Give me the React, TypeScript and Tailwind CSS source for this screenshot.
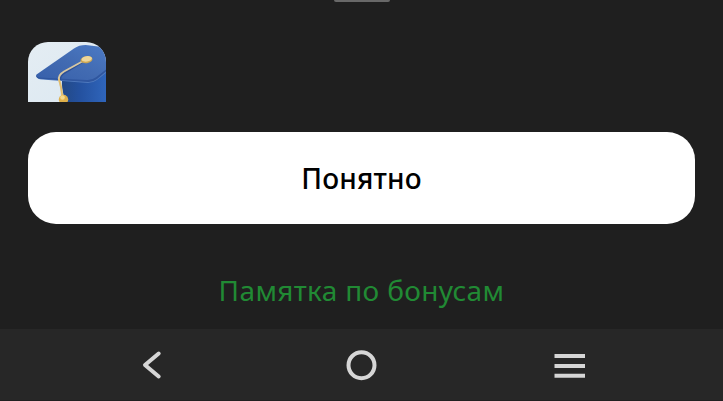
import type { ReactNode } from "react";

function CapIcon() {
  return (
    <svg className="block" width="78" height="60" viewBox="0 0 78 60" aria-hidden="true">
      <defs>
        <linearGradient id="tile" x1="0" y1="0" x2="1" y2="1">
          <stop offset="0" stopColor="#e4edf3" />
          <stop offset="1" stopColor="#dce8f1" />
        </linearGradient>
        <linearGradient id="board" x1="0" y1="1" x2="1" y2="0">
          <stop offset="0" stopColor="#3760ab" />
          <stop offset="0.5" stopColor="#426bb2" />
          <stop offset="1" stopColor="#4b7ac5" />
        </linearGradient>
        <linearGradient id="base" x1="0" y1="0" x2="1" y2="0">
          <stop offset="0" stopColor="#234985" />
          <stop offset="0.4" stopColor="#24519f" />
          <stop offset="1" stopColor="#2f65bb" />
        </linearGradient>
      </defs>
      <rect width="78" height="60" fill="url(#tile)" />
      <path d="M34 35L78 26V60H38Q33 49 34 35Z" fill="url(#base)" />
      <path d="M8.5 34Q9 37 14 37.6L60 41Q65 41 69 38L78 31V26L60 37L12 34Z" fill="#4f79bd" />
      <path d="M8 33.5Q8 36.5 12 36.8L60 39.9Q65 40.2 69 37.1L78 29.5V25L60 36L12 33Z" fill="#2f569f" />
      <path
        d="M8.5 32.5L46 6.5Q52 2.5 60 3.2L70 4.5Q75 5.5 78 9V27.5L68 35.2Q64 38.2 59 38L12 35.4Q7 34.8 8.5 32.5Z"
        fill="url(#board)"
      />
      <path d="M57 18.5L37 30.5Q32 33 32 38" fill="none" stroke="#2d5096" strokeWidth="2" />
      <path d="M57 18L36 29.5Q30 33 31 38Q33.5 45 34 55" fill="none" stroke="#d6c7a2" strokeWidth="1.9" />
      <path d="M31 37Q33.5 45 34.5 55" fill="none" stroke="#e3bd6b" strokeWidth="1.7" />
      <ellipse cx="58.5" cy="17.7" rx="6" ry="3.5" fill="#cda752" transform="rotate(-9 58.5 17.7)" />
      <ellipse cx="58.8" cy="16.9" rx="5.2" ry="2.7" fill="#eed79b" transform="rotate(-9 58.8 16.9)" />
      <circle cx="35.5" cy="57.5" r="4.7" fill="#dfb04a" />
      <circle cx="34.5" cy="55.5" r="2.3" fill="#f6d98a" />
    </svg>
  );
}

function NavButton({ label, children }: { label: string; children: ReactNode }) {
  return (
    <button type="button" aria-label={label} className="flex size-10 items-center justify-center">
      <svg
        width="40"
        height="40"
        viewBox="0 0 40 40"
        fill="none"
        stroke="#d6d6d6"
        strokeWidth="4"
        strokeLinecap="round"
        strokeLinejoin="round"
      >
        {children}
      </svg>
    </button>
  );
}

export default function App() {
  return (
    <div className="flex h-[401px] w-[723px] flex-col overflow-hidden bg-[#1f1f1f] font-['Noto_Sans',sans-serif]">
      <div className="mx-auto h-0.5 w-14 shrink-0 rounded-b-sm bg-[#686868]" />

      <main className="flex h-[327px] shrink-0 flex-col px-7 pt-10">
        <div className="h-[60px] w-[78px] shrink-0 overflow-hidden rounded-t-[20px]">
          <CapIcon />
        </div>
        <button
          type="button"
          className="mt-[30px] flex h-[92px] shrink-0 items-center justify-center rounded-[28px] bg-white pb-px text-[28px] leading-none font-medium tracking-[0.2px] text-black"
        >
          Понятно
        </button>
        <a href="#" className="mt-12 self-center text-[28px] leading-9 tracking-[0.34px] text-[#218a34]">
          Памятка по бонусам
        </a>
      </main>

      <nav className="flex h-[72px] shrink-0 justify-between border-b border-[#202020] bg-[#272727] pt-4 pr-[133px] pl-[132px]">
        <NavButton label="Назад">
          <path d="M26.7 8.5L13 20L26.7 31.5" />
        </NavButton>
        <NavButton label="Домой">
          <circle cx="20.5" cy="20.2" r="13" />
        </NavButton>
        <NavButton label="Меню">
          <g strokeLinecap="butt">
            <path d="M4.5 11H35M4.5 21H35M4.5 30.7H35" />
          </g>
        </NavButton>
      </nav>
    </div>
  );
}
